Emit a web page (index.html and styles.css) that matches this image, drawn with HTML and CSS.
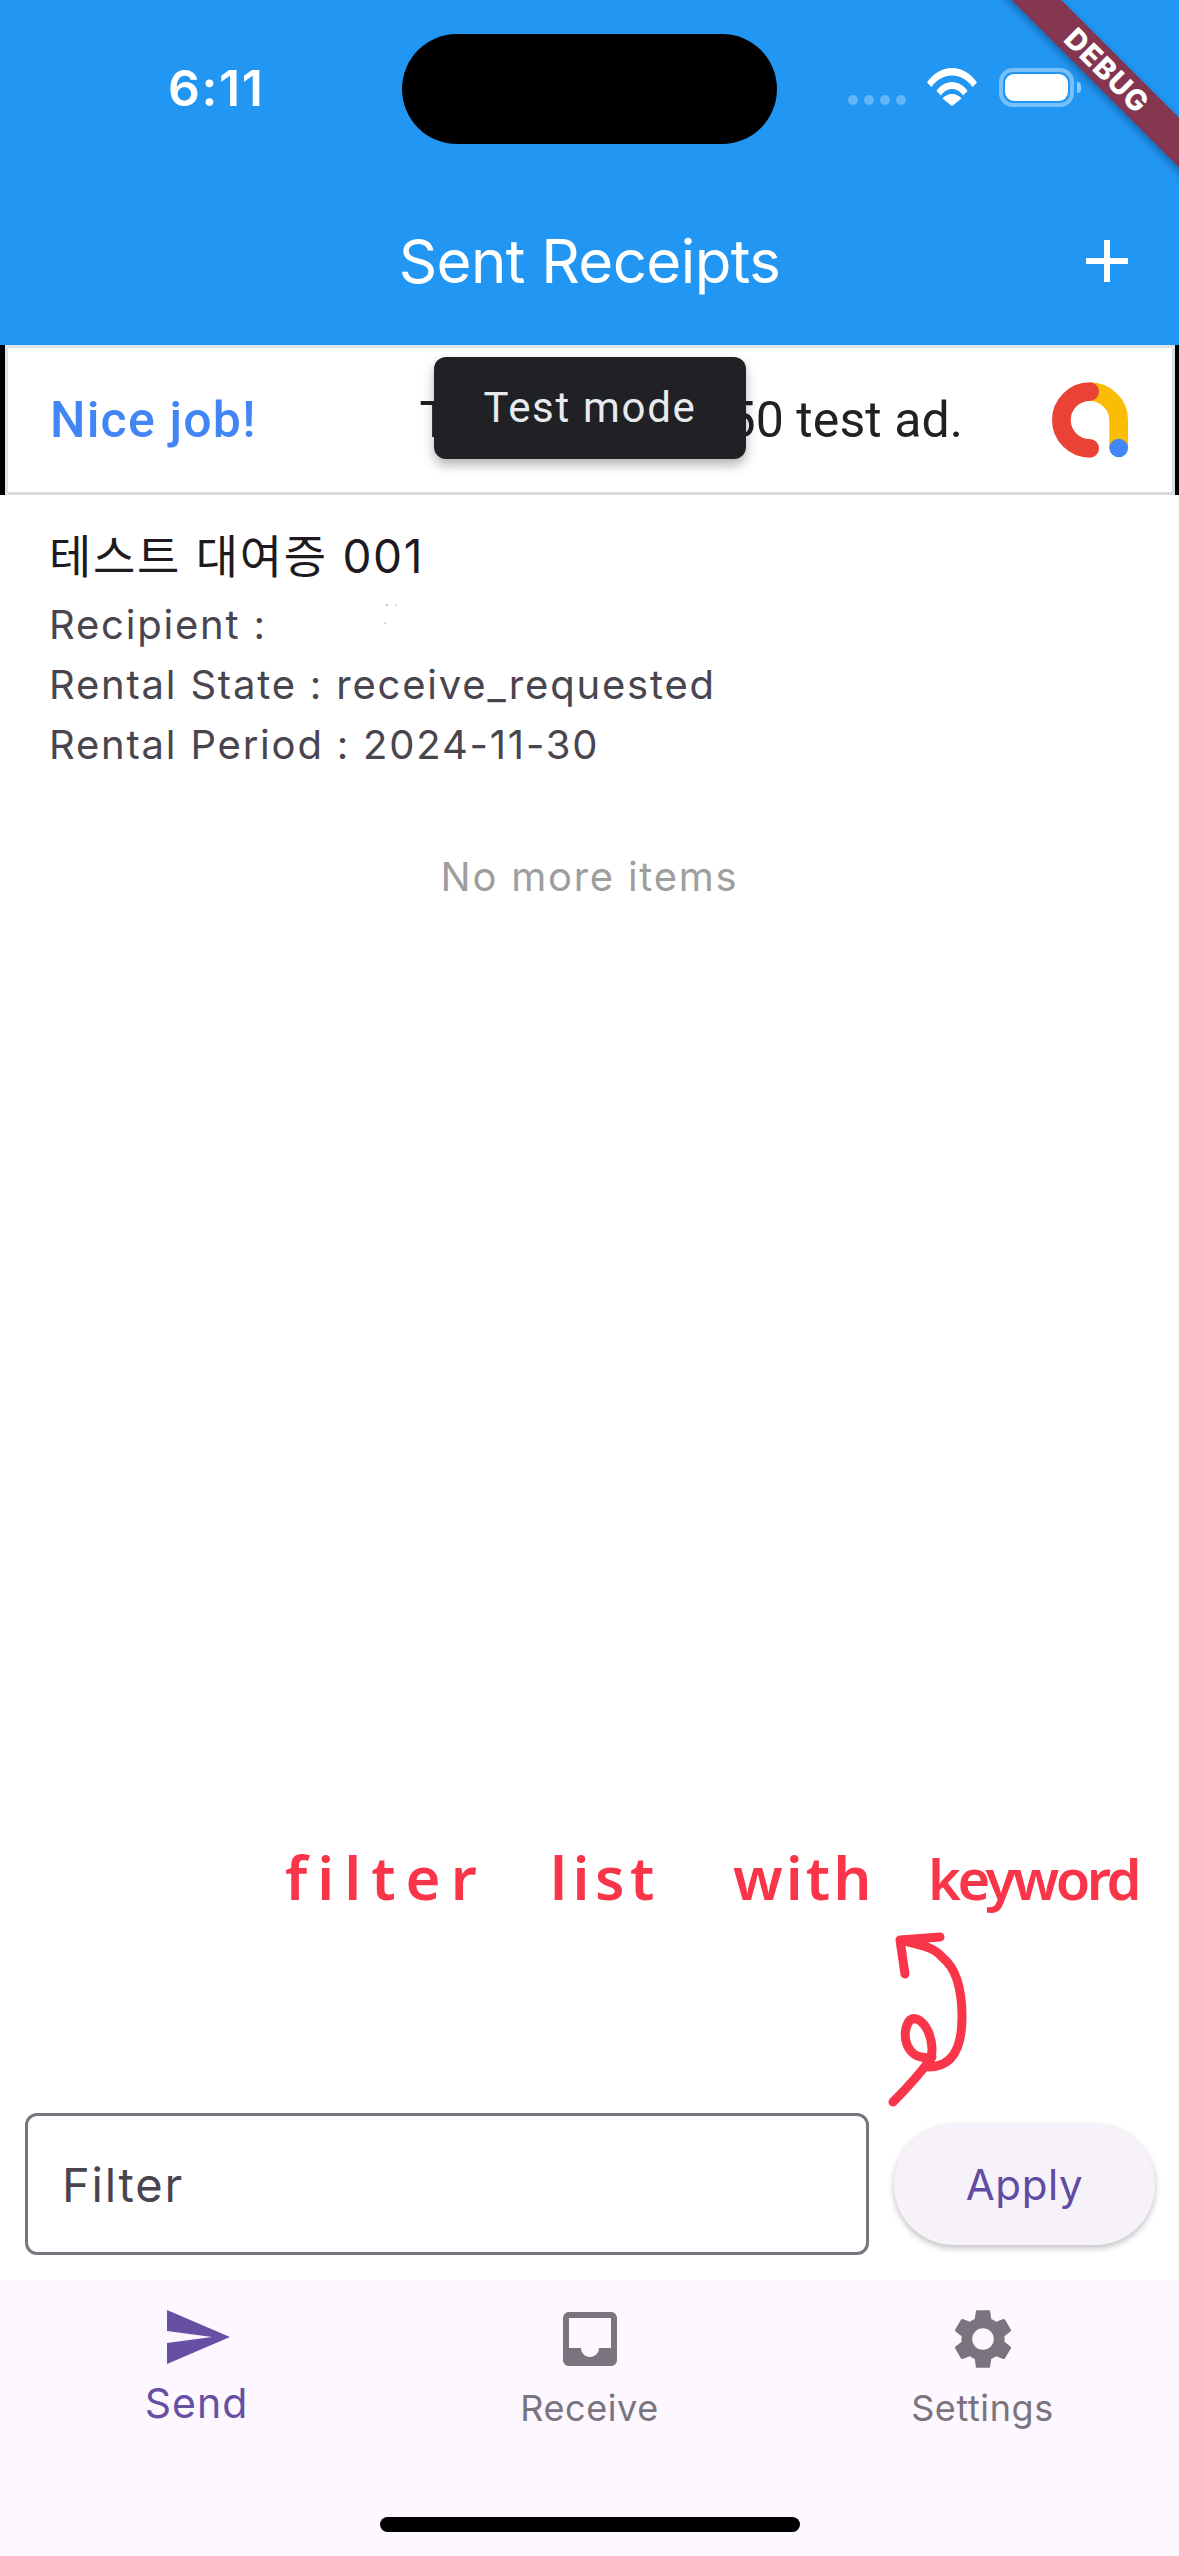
FILE: index.html
```html
<!DOCTYPE html>
<html lang="en">
<head>
<meta charset="utf-8">
<title>Sent Receipts</title>
<link rel="stylesheet" href="styles.css">
</head>
<body>
<div class="screen">
  <header class="appbar">
    <div class="status">
      <span class="time">6:11</span>
      <div class="signals">
        <div class="dots"><i></i><i></i><i></i><i></i></div>
        <svg class="wifi" viewBox="0 0 50 38"><path d="M0 14.5C6 5.5 15 0 25 0s19 5.500 25 14.500l-4.500 4.500C40 11.500 33 7.500 25 7.500S10 11.500 4.500 19z"/><path d="M9.500 23C13 17.500 19 14 25 14s12 3.500 15.500 9L36 27.500C33.500 23.500 29.500 21 25 21s-8.500 2.500-11 6.500z"/><path d="M25 38L15.500 30.500C18 27.500 21.500 26 25 26s7 1.500 9.500 4.500z"/></svg>
        <div class="battery"><div class="battery-fill"></div></div>
        <div class="battery-nub"></div>
      </div>
    </div>
    <div class="toolbar">
      <h1 class="title">Sent Receipts</h1>
      <svg class="add" viewBox="0 0 24 24"><path d="M19 13h-6v6h-2v-6H5v-2h6V5h2v6h6v2z"/></svg>
    </div>
  </header>

  <section class="ad">
    <span class="ad-nice">Nice job!</span>
    <span class="ad-text">This is a 320x50 test ad.</span>
    <svg class="ad-logo" viewBox="0 0 75 75"><path class="logo-y" d="M22.700 23.700A29 28.300 0 0 1 51.700 52V80"/><path class="logo-r" d="M22.700 23.700A28.300 28.300 0 0 0 22.700 80.300"/><circle class="logo-b" cx="51.700" cy="80" r="9.300"/></svg>
  </section>

  <main class="list">
    <article class="item">
      <h2 class="item-title">테스트 대여증 001</h2>
      <p class="item-line">Recipient :<span class="specks"></span></p>
      <p class="item-line">Rental State : receive_requested</p>
      <p class="item-line">Rental Period : 2024-11-30</p>
    </article>
    <p class="no-more">No more items</p>
  </main>

  <form class="filter-row">
    <div class="filter-box"><span class="filter-label">Filter</span></div>
    <button class="apply" type="button">Apply</button>
  </form>

  <nav class="nav">
    <div class="nav-item active">
      <svg class="nav-icon" viewBox="0 0 24 24"><path d="M2.010 21L23 12 2.010 3 2 10l15 2-15 2z"/></svg>
      <span class="nav-label">Send</span>
    </div>
    <div class="nav-item">
      <svg class="nav-icon" viewBox="0 0 24 24"><path d="M19 3H4.990c-1.110 0-1.980.890-1.980 2L3 19c0 1.100.880 2 1.990 2H19c1.100 0 2-.900 2-2V5c0-1.110-.900-2-2-2zm0 12h-4c0 1.660-1.350 3-3 3s-3-1.340-3-3H4.990V5H19v10z"/></svg>
      <span class="nav-label">Receive</span>
    </div>
    <div class="nav-item">
      <svg class="nav-icon" viewBox="0 0 24 24"><path d="M19.140 12.940c.04-.3.060-.61.060-.94 0-.32-.02-.64-.07-.94l2.030-1.580c.18-.14.230-.41.120-.61l-1.920-3.320c-.12-.22-.37-.29-.59-.22l-2.390.96c-.5-.38-1.030-.7-1.620-.94L14.400 2.810c-.04-.24-.24-.41-.48-.41h-3.840c-.24 0-.43.170-.47.410L9.250 5.350C8.660 5.590 8.120 5.920 7.630 6.290L5.240 5.330c-.22-.08-.47 0-.59.220L2.740 8.870C2.620 9.080 2.660 9.340 2.860 9.480l2.030 1.580C4.840 11.360 4.800 11.690 4.800 12s.02.640.07.940l-2.030 1.580c-.18.140-.23.410-.12.610l1.920 3.320c.12.220.37.290.59.220l2.390-.96c.5.380 1.030.7 1.620.94l.36 2.540c.05.240.24.410.48.410h3.840c.24 0 .44-.17.470-.41l.36-2.540c.59-.24 1.130-.56 1.620-.94l2.390.96c.22.080.47 0 .59-.22l1.920-3.320c.12-.22.070-.47-.12-.61L19.140 12.940zM12 15.600c-1.980 0-3.600-1.620-3.600-3.600s1.620-3.600 3.600-3.600 3.600 1.620 3.600 3.600-1.620 3.600-3.600 3.600z"/></svg>
      <span class="nav-label">Settings</span>
    </div>
    <div class="home-indicator"></div>
  </nav>

  <div class="island"></div>
  <div class="debug"><span>DEBUG</span></div>
  <div class="tooltip">Test mode</div>
  <div class="note">
    <span class="note-word w1">filter</span>
    <span class="note-word w2">list</span>
    <span class="note-word w3">with</span>
    <span class="note-word w4">keyword</span>
  </div>
  <svg class="arrow" viewBox="0 0 120 180"><path d="M13 172C30 155 45 137 52 127 25 132 20 102 30 90 42 82 60 112 48 137 70 137 82 122 82 87 82 57 75 37 62 27 52 15 35 15 22 10M60 7L20 10 25 44"/></svg>
</div>
</body>
</html>
```
FILE: styles.css
```css
* { box-sizing: border-box; }
html, body { margin: 0; padding: 0; background: #fff; }
.screen {
  position: relative;
  width: 1179px;
  height: 2556px;
  overflow: hidden;
  display: flex;
  flex-direction: column;
  background: #fff;
  font-family: Inter, "Noto Sans CJK KR", sans-serif;
}

/* App bar */
.appbar { height: 345px; background: #2196f3; color: #fff; flex: none; display: flex; flex-direction: column; }
.status { height: 174px; display: flex; align-items: flex-start; justify-content: space-between; padding: 62px 98px 0 168px; }
.time { font-size: 50px; line-height: 52px; font-weight: 600; letter-spacing: 1.6px; }
.signals { display: flex; align-items: flex-start; padding-top: 6px; }
.dots { display: flex; gap: 6px; margin-top: 27px; margin-right: 21px; }
.dots i { width: 10px; height: 10px; border-radius: 50%; background: rgba(255,255,255,.3); }
.wifi { width: 50px; height: 38px; fill: #fff; margin-right: 22px; }
.battery { width: 75px; height: 39px; border: 4px solid rgba(255,255,255,.4); border-radius: 14px; padding: 2px; }
.battery-fill { height: 100%; background: #fff; border-radius: 9px; }
.battery-nub { width: 4px; height: 11px; margin: 14px 0 0 3px; background: rgba(255,255,255,.5); border-radius: 0 4px 4px 0; }
.toolbar { flex: 1; display: flex; align-items: flex-start; justify-content: center; position: relative; }
.title { margin: 0; font-size: 60px; line-height: 76px; font-weight: 400; letter-spacing: -.6px; padding-top: 49px; box-sizing: content-box; }
.add { position: absolute; left: 1071px; top: 51px; width: 72px; height: 72px; fill: #fff; }

/* Ad */
.ad {
  flex: none; height: 150px; display: flex; align-items: center;
  border-left: 5px solid #000; border-right: 4px solid #000;
  box-shadow: inset 3px 3px 0 #dfe3e6, inset -3px -3px 0 #dadce0;
  padding: 0 30px 0 45px; position: relative;
}
.ad-nice { font-family: Roboto, sans-serif; font-size: 50px; font-weight: 500; color: #4285f4; line-height: 60px; letter-spacing: 1.2px; }
.ad-text { font-family: Roboto, sans-serif; font-size: 50px; color: #202124; line-height: 60px; margin-left: 163px; letter-spacing: .08px; white-space: nowrap; }
.ad-logo { position: absolute; left: 1062px; top: 23px; width: 75px; height: 75px; overflow: visible; fill: none; stroke-width: 18.700px; }
.logo-y { stroke: #fbbc04; }
.logo-r { stroke: #ea4335; stroke-linecap: round; }
.logo-b { fill: #4285f4; stroke: none; }

/* Tooltip */
.tooltip {
  position: absolute; left: 434px; top: 357px; width: 312px; height: 102px;
  background: #202124; color: #e8eaed; border-radius: 12px;
  box-shadow: 0 6px 12px rgba(0,0,0,.3);
  font-family: Roboto, sans-serif; font-size: 42px; line-height: 102px; text-align: center; letter-spacing: 1.7px;
}

/* List */
.list { flex: 1; min-height: 0; }
.item { padding: 34px 30px 0 49px; }
.item-title { margin: 0 0 12px; font-size: 46px; line-height: 54px; font-weight: 400; color: #1d1b20; letter-spacing: 1.7px; }
.item-line { margin: 0; font-size: 40px; line-height: 60px; color: #49454f; letter-spacing: 1.8px; position: relative; }
.specks { position: absolute; left: 337px; top: 9px; width: 2px; height: 2px; background: #c4c4c4; box-shadow: 9px 0 0 #d8d8d8, -2px 18px 0 #d8d8d8; }
.no-more { margin: 72px 0 0; text-align: center; font-size: 40px; line-height: 60px; color: #9e9e9e; letter-spacing: 1.75px; }

/* Filter */
.filter-row { flex: none; display: flex; align-items: center; gap: 25px; padding: 0 24px 25px 25px; margin: 0; }
.filter-box { flex: 1; height: 142px; border: 3px solid #79747e; border-radius: 12px; display: flex; align-items: center; padding-left: 34px; }
.filter-label { font-size: 47px; color: #49454f; letter-spacing: 1.8px; }
.apply {
  width: 261px; height: 121px; border: 0; border-radius: 60px; background: #f7f2fa;
  box-shadow: 0 3px 6px rgba(0,0,0,.25);
  font-family: inherit; font-size: 42px; font-weight: 400; color: #5f4ca3; letter-spacing: .6px;
}

/* Navigation */
.nav { flex: none; height: 276px; background: #fdf7ff; display: grid; grid-template-columns: repeat(3, 1fr); position: relative; }
.nav-item { display: flex; flex-direction: column; align-items: center; padding-top: 23px; color: #79747e; }
.nav-icon { width: 72px; height: 72px; fill: currentColor; flex: none; }
.nav-label { font-size: 36px; line-height: 44px; margin-top: 11px; letter-spacing: .6px; }
.nav-item.active { color: #6750a4; padding-top: 21px; }
.nav-item.active .nav-label { font-size: 41px; line-height: 48px; margin-top: 6px; letter-spacing: 1px; }
.home-indicator { position: absolute; left: 380px; top: 237px; width: 420px; height: 15px; border-radius: 8px; background: #000; }

/* Overlays */
.island { position: absolute; left: 402px; top: 34px; width: 375px; height: 110px; border-radius: 55px; background: #000; }
.debug {
  position: absolute; left: 957px; top: 53px; width: 300px; height: 35px;
  transform: rotate(45deg); background: #84354f;
  box-shadow: 0 3px 8px rgba(0,0,0,.3);
  display: flex; align-items: center; justify-content: center;
  color: #fff; font-family: Inter, sans-serif; font-weight: 800; font-size: 29px; line-height: 35px; letter-spacing: 1px;
}
.note {
  position: absolute; left: 285px; top: 1835px; display: flex; align-items: baseline;
  font-family: "Noto Sans", sans-serif; font-size: 60px; line-height: 84px; font-weight: 600; color: #f9354a;
}
.note-word { display: block; }
.w1 { width: 265px; letter-spacing: 10px; }
.w2 { width: 183px; letter-spacing: 5.500px; }
.w3 { width: 195px; letter-spacing: 3px; }
.w4 { font-size: 56px; letter-spacing: -3.500px; }
.arrow { position: absolute; left: 880px; top: 1930px; width: 120px; height: 180px; fill: none; stroke: #f9354a; stroke-width: 9px; stroke-linecap: round; stroke-linejoin: round; }
```
